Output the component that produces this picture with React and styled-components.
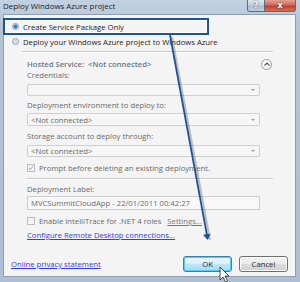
import React from "react";
import styled, { createGlobalStyle } from "styled-components";

const Global = createGlobalStyle`
  html, body { margin: 0; padding: 0; background: #fff; }
  body { font-family: "Open Sans", "Noto Sans", sans-serif; font-size: 7.7px; color: #1e1e1e; }
`;

const Window = styled.div`
  position: relative;
  width: 300px;
  height: 282px;
  box-sizing: border-box;
  background: linear-gradient(180deg, #c3d2e2 0%, #b3c4d7 10%, #aebfd3 100%);
  display: flex;
  flex-direction: column;
  overflow: hidden;
`;

const TitleBar = styled.div`
  height: 14px;
  display: flex;
  align-items: flex-start;
  padding-left: 3px;
  position: relative;
`;

const Title = styled.div`
  font-size: 7.9px;
  line-height: 13px;
  color: #1b1f28;
`;

const Caption = styled.div`
  position: absolute;
  top: 0;
  right: 4px;
  display: flex;
`;

const CapBtn = styled.div`
  height: 12px;
  width: ${(p) => p.$w}px;
  box-sizing: border-box;
  border: 1px solid #5d6d80;
  border-top: none;
  border-left-width: ${(p) => (p.$first ? 1 : 0)}px;
  border-radius: ${(p) => (p.$first ? "0 0 0 3px" : "0 0 3px 0")};
  background: ${(p) =>
    p.$red
      ? "linear-gradient(180deg, #e3a193 0%, #d36a58 45%, #c0402a 55%, #d0705a 100%)"
      : "linear-gradient(180deg, #dfe7ef 0%, #c3d0de 45%, #aebdcf 55%, #c1cfde 100%)"};
  color: #fff;
  font: bold 8px "DejaVu Sans", sans-serif;
  display: flex;
  align-items: center;
  justify-content: center;
  text-shadow: 0 0 2px #333;
`;

const Client = styled.div`
  flex: 1;
  margin: 0 4px 5px 3px;
  background: #f4f4f4;
  border: 1px solid #8e9db0;
  display: flex;
  flex-direction: column;
  position: relative;
`;

const Highlight = styled.div`
  margin-top: 3px;
  width: 206px;
  height: 17px;
  box-sizing: border-box;
  border: 2px solid #1d5498;
  box-shadow: inset 0 0 0 1px #ffffff;
  display: flex;
  align-items: center;
  padding-left: 7px;
  margin-left: -1px;
`;

const RadioRow = styled.div`
  display: flex;
  align-items: center;
  height: 13px;
  padding-left: ${(p) => p.$pl || 8}px;
`;

const Radio = styled.span`
  width: 7px;
  height: 7px;
  border-radius: 50%;
  box-sizing: border-box;
  border: 1px solid #8f9fb1;
  background: ${(p) =>
    p.$on
      ? "radial-gradient(circle, #2a7fcf 0 1.6px, #bcd3e8 2.2px, #eef3f8 3px)"
      : "radial-gradient(circle, #d3dbe4 0 1.5px, #eef2f6 3px)"};
  margin-right: 4px;
  flex: none;
`;

const Text = styled.span`
  font-size: 7.7px;
  line-height: 10px;
  color: ${(p) => p.$c || "#1e1e1e"};
  font-weight: ${(p) => (p.$b ? 600 : 400)};
  white-space: nowrap;
`;

const Sep = styled.div`
  margin-top: ${(p) => p.$mt}px;
  margin-left: ${(p) => p.$ml}px;
  width: ${(p) => p.$w}px;
  height: 1px;
  background: #c8c8c8;
  border-bottom: 1px solid #ffffff;
`;

const Section = styled.div`
  padding-left: 23px;
  display: flex;
  flex-direction: column;
`;

const HeaderRow = styled.div`
  margin-top: 5px;
  height: 12px;
  width: 245px;
  display: flex;
  align-items: center;
  justify-content: space-between;
`;

const Collapse = styled.div`
  width: 11px;
  height: 11px;
  box-sizing: border-box;
  border-radius: 50%;
  border: 1px solid #9a9a9a;
  background: #f8f8f8;
  display: flex;
  align-items: center;
  justify-content: center;
`;

const Label = styled.div`
  margin-top: ${(p) => p.$mt}px;
  height: 10px;
  font-size: 7.7px;
  line-height: 10px;
  color: #6a6a6a;
  white-space: nowrap;
`;

const Select = styled.div`
  margin-top: ${(p) => p.$mt}px;
  width: 233px;
  height: ${(p) => p.$h}px;
  box-sizing: border-box;
  border: 1px solid #cfcfcf;
  border-radius: 2px;
  background: #f6f6f6;
  display: flex;
  align-items: center;
  justify-content: space-between;
  padding: 0 4px 0 3px;
  font-size: 7.7px;
  color: #666;
`;

const Caret = styled.span`
  width: 0;
  height: 0;
  border-left: 2.5px solid transparent;
  border-right: 2.5px solid transparent;
  border-top: 2.5px solid #9a9a9a;
`;

const CheckRow = styled.div`
  margin-top: ${(p) => p.$mt}px;
  height: 10px;
  display: flex;
  align-items: center;
  white-space: nowrap;
  color: #6a6a6a;
  font-size: 7.7px;
`;

const Box = styled.span`
  width: 8px;
  height: 8px;
  box-sizing: border-box;
  border: 1px solid #bdbdbd;
  background: linear-gradient(180deg, #f0f0f0, #fafafa);
  margin-right: 4px;
  display: flex;
  align-items: center;
  justify-content: center;
  flex: none;
`;

const SettingsText = styled.span`
  margin-left: 6px;
  text-decoration: underline;
  color: #777;
`;

const TextBox = styled.div`
  margin-top: 2px;
  width: 233px;
  height: 14px;
  box-sizing: border-box;
  border: 1px solid #cdcdcd;
  background: #f8f8f8;
  padding-left: 3px;
  display: flex;
  align-items: center;
  font-size: 7.7px;
  color: #6a6a6a;
`;

const Link = styled.a`
  font-size: 7.7px;
  line-height: 10px;
  color: #2f3cf0;
  text-decoration: underline;
  white-space: nowrap;
`;

const LinkLine = styled.div`
  margin-top: 4px;
  height: 10px;
  display: flex;
`;

const Footer = styled.div`
  margin-top: auto;
  margin-bottom: 4px;
  display: flex;
  align-items: center;
  height: 16px;
  padding: 0 7px 0 7px;
`;

const Spacer = styled.div`
  flex: 1;
`;

const Button = styled.div`
  width: 49px;
  height: 16px;
  box-sizing: border-box;
  margin-left: ${(p) => p.$ml || 0}px;
  border: 1px solid ${(p) => (p.$focus ? "#3c7fb1" : "#707070")};
  border-radius: 3px;
  background: ${(p) =>
    p.$focus
      ? "linear-gradient(180deg, #eaf6fd 0%, #d9f0fc 50%, #bee6fd 51%, #a7d9f5 100%)"
      : "linear-gradient(180deg, #f2f2f2 0%, #ebebeb 50%, #dddddd 51%, #cfcfcf 100%)"};
  box-shadow: inset 0 0 0 1px ${(p) => (p.$focus ? "#48d0f7" : "#fbfbfb")};
  display: flex;
  align-items: center;
  justify-content: center;
  font-size: 7.7px;
  color: #1e1e1e;
`;

const Overlay = styled.svg`
  position: absolute;
  left: 0;
  top: 0;
  pointer-events: none;
`;

export default function App() {
  return (
    <>
      <Global />
      <Window>
        <TitleBar>
          <Title>Deploy Windows Azure project</Title>
          <Caption>
            <CapBtn $w={18} $first>?</CapBtn>
            <CapBtn $w={31} $red>x</CapBtn>
          </Caption>
        </TitleBar>
        <Client>
          <Highlight>
            <Radio $on />
            <Text>Create Service Package Only</Text>
          </Highlight>
          <RadioRow>
            <Radio />
            <Text>Deploy your Windows Azure project to Windows Azure</Text>
          </RadioRow>
          <Sep $mt={3} $ml={18} $w={251} />
          <Section>
            <HeaderRow>
              <Text $b $c="#6b7785">Hosted Service:&nbsp; &lt;Not connected&gt;</Text>
              <Collapse>
                <svg width="6" height="4" viewBox="0 0 6 4">
                  <path d="M0.5 3.5 L3 1 L5.5 3.5" fill="none" stroke="#555" strokeWidth="1.1" />
                </svg>
              </Collapse>
            </HeaderRow>
            <Label $mt={0}>Credentials:</Label>
            <Select $mt={4} $h={12}>
              <span />
              <Caret />
            </Select>
            <Label $mt={4}>Deployment environment to deploy to:</Label>
            <Select $mt={3} $h={13}>
              <span>&lt;Not connected&gt;</span>
              <Caret />
            </Select>
            <Label $mt={5}>Storage account to deploy through:</Label>
            <Select $mt={4} $h={12}>
              <span>&lt;Not connected&gt;</span>
              <Caret />
            </Select>
            <CheckRow $mt={6}>
              <Box>
                <svg width="6" height="6" viewBox="0 0 6 6">
                  <path d="M0.8 3 L2.3 4.8 L5.3 0.8" fill="none" stroke="#9aa6b4" strokeWidth="1" />
                </svg>
              </Box>
              Prompt before deleting an existing deployment.
            </CheckRow>
            <Sep $mt={5} $ml={0} $w={246} />
            <Label $mt={4}>Deployment Label:</Label>
            <TextBox>MVCSummitCloudApp - 22/01/2011 00:42:27</TextBox>
            <CheckRow $mt={6}>
              <Box />
              Enable IntelliTrace for .NET 4 roles
              <SettingsText>Settings...</SettingsText>
            </CheckRow>
            <LinkLine>
              <Link>Configure Remote Desktop connections...</Link>
            </LinkLine>
          </Section>
          <Footer>
            <Link>Online privacy statement</Link>
            <Spacer />
            <Button $focus>OK</Button>
            <Button $ml={7}>Cancel</Button>
          </Footer>
        </Client>
        <Overlay width="300" height="282" viewBox="0 0 300 282">
          <defs>
            <marker id="ah" markerWidth="6" markerHeight="8" refX="4" refY="4" orient="auto" markerUnits="userSpaceOnUse">
              <path d="M0 0 L6 4 L0 8 Z" fill="#1d5498" />
            </marker>
          </defs>
          <line x1="172" y1="37" x2="210" y2="240" stroke="#555" strokeOpacity="0.35" strokeWidth="2" />
          <line x1="170" y1="35" x2="207.5" y2="238" stroke="#1d5498" strokeWidth="1.8" markerEnd="url(#ah)" />
          <path
            d="M220 267 L220 280 L223 277 L225.5 282 L227.5 281 L225 276 L229 276 Z"
            fill="#fff"
            stroke="#222"
            strokeWidth="0.8"
            strokeLinejoin="round"
          />
        </Overlay>
      </Window>
    </>
  );
}
